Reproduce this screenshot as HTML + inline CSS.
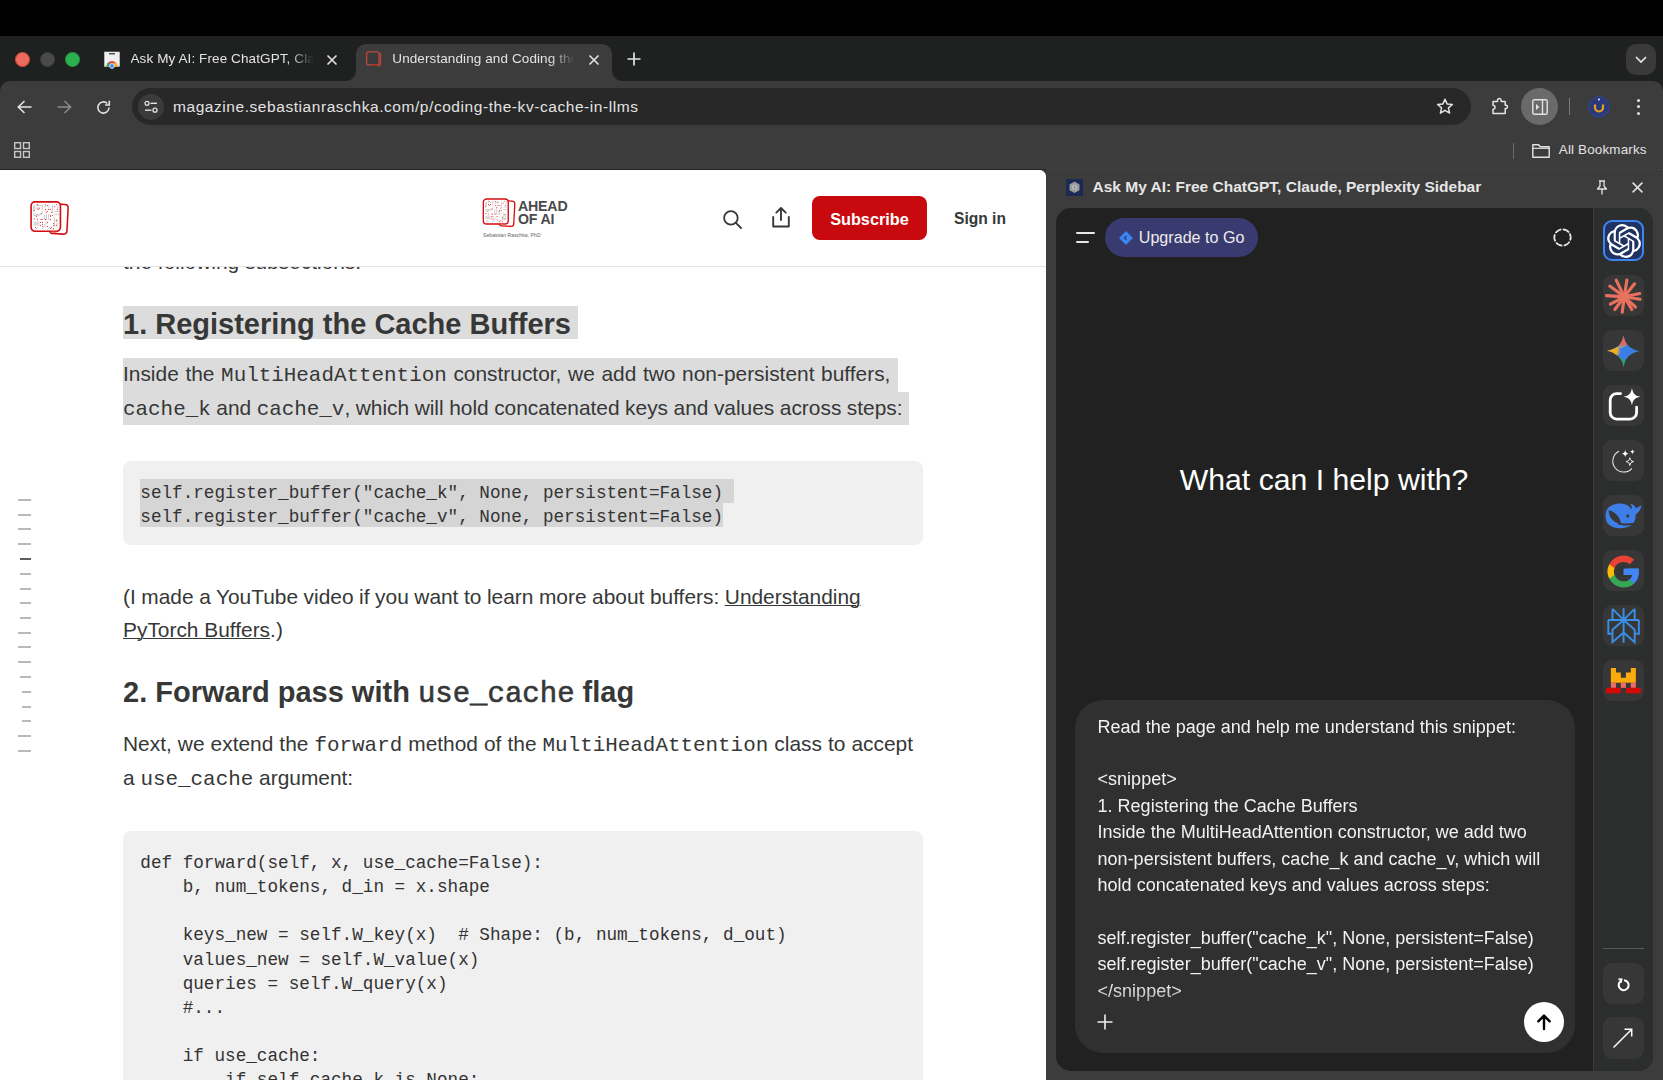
<!DOCTYPE html>
<html><head><meta charset="utf-8">
<style>
*{box-sizing:border-box;margin:0;padding:0}
html,body{width:1663px;height:1080px;overflow:hidden;background:#000;font-family:"Liberation Sans",sans-serif}
.a{position:absolute}
.t{position:absolute;white-space:pre}
svg{position:absolute;overflow:visible}
.mono{font-family:"Liberation Mono",monospace}
</style></head><body>
<!-- top black bar -->
<div class="a" style="left:0;top:0;width:1663px;height:36px;background:#000"></div>
<!-- tab strip -->
<div class="a" id="tabstrip" style="left:0;top:36px;width:1663px;height:70px;background:#1f2020"></div>
<div class="a" style="left:0;top:150px;width:1663px;height:930px;background:#3c3c3c"></div>
<!-- toolbar + bookmarks -->
<div class="a" style="left:0;top:81px;width:1663px;height:89px;background:#3c3c3c;border-radius:10px 10px 0 0"></div>
<!-- traffic lights -->
<div class="a" style="left:14.5px;top:51.5px;width:15px;height:15px;border-radius:50%;background:#ec6a5e;border:0.5px solid #d1473b"></div>
<div class="a" style="left:39.5px;top:51.5px;width:15px;height:15px;border-radius:50%;background:#4a4a4a;border:0.5px solid #3d3d3d"></div>
<div class="a" style="left:65px;top:51.5px;width:15px;height:15px;border-radius:50%;background:#2db04f;border:0.5px solid #239640"></div>
<!-- tab1 favicon (web store like) -->
<svg style="left:104px;top:51px" width="16" height="16" viewBox="0 0 16 16">
<rect x="0.5" y="1" width="15" height="14.5" fill="#f1f1f1" stroke="#cfcfcf" stroke-width="0.6"/>
<rect x="5" y="2" width="6" height="1.5" fill="#555"/>
<path d="M2.5 15.5 A5.5 5.5 0 0 1 13.5 15.5 Z" fill="#e8453c"/>
<path d="M2.5 15.5 A5.5 5.5 0 0 1 4.5 11.2 L8 15.5Z" fill="#34a853"/>
<path d="M13.5 15.5 A5.5 5.5 0 0 0 11 11 L8 15.5Z" fill="#fbbc05"/>
<circle cx="8" cy="15" r="2.4" fill="#4285f4" stroke="#fff" stroke-width="0.8"/>
</svg>
<div class="t" style="left:130.5px;top:50.3px;font-size:13.5px;letter-spacing:0.1px;line-height:18px;color:#e3e3e3;width:185px;overflow:hidden;-webkit-mask-image:linear-gradient(90deg,#000 158px,transparent 183px)">Ask My AI: Free ChatGPT, Claude</div>
<svg style="left:327px;top:54.5px" width="10" height="10" viewBox="0 0 10 10"><path d="M0.5 0.5L9.5 9.5M9.5 0.5L0.5 9.5" stroke="#e3e3e3" stroke-width="1.6"/></svg>
<!-- active tab -->
<div class="a" style="left:356px;top:44px;width:256px;height:40px;background:#3c3c3c;border-radius:10px 10px 0 0"></div>
<svg style="left:346px;top:71px" width="10" height="10" viewBox="0 0 10 10"><path d="M0 10 A10 10 0 0 0 10 0 V10Z" fill="#3c3c3c"/></svg>
<svg style="left:612px;top:71px" width="10" height="10" viewBox="0 0 10 10"><path d="M10 10 A10 10 0 0 1 0 0 V10Z" fill="#3c3c3c"/></svg>
<svg style="left:366px;top:51px" width="16" height="16" viewBox="0 0 16 16">
<rect x="0.7" y="0.9" width="12.3" height="13" rx="1.6" fill="#3a3a3a" stroke="#c0473a" stroke-width="1.3"/>
<path d="M13.2 2.5 L14.8 3.2 L14.3 14.8 L12 14.8" fill="none" stroke="#c0473a" stroke-width="1.1"/>
<circle cx="9" cy="13.8" r="0.8" fill="#e00"/>
</svg>
<div class="t" style="left:392.3px;top:50.3px;font-size:13.5px;letter-spacing:0.1px;line-height:18px;color:#e3e3e3;width:185px;overflow:hidden;-webkit-mask-image:linear-gradient(90deg,#000 158px,transparent 183px)">Understanding and Coding the KV</div>
<svg style="left:588.5px;top:54.5px" width="10" height="10" viewBox="0 0 10 10"><path d="M0.5 0.5L9.5 9.5M9.5 0.5L0.5 9.5" stroke="#e3e3e3" stroke-width="1.6"/></svg>
<svg style="left:626.5px;top:52px" width="14" height="14" viewBox="0 0 14 14"><path d="M7 0.5V13.5M0.5 7H13.5" stroke="#e3e3e3" stroke-width="1.7"/></svg>
<!-- tab dropdown -->
<div class="a" style="left:1626px;top:44px;width:30px;height:31px;border-radius:10px;background:#3a3a3a"></div>
<svg style="left:1635px;top:56px" width="12" height="7" viewBox="0 0 12 7"><path d="M1 1L6 6L11 1" fill="none" stroke="#e3e3e3" stroke-width="1.7"/></svg>
<!-- nav icons -->
<svg style="left:17px;top:100px" width="15" height="14" viewBox="0 0 15 14"><path d="M14.5 7H1.5M7.5 1L1.3 7L7.5 13" fill="none" stroke="#e3e3e3" stroke-width="1.6"/></svg>
<svg style="left:56.5px;top:100px" width="15" height="14" viewBox="0 0 15 14"><path d="M0.5 7H13.5M7.5 1L13.7 7L7.5 13" fill="none" stroke="#8a8a8a" stroke-width="1.5"/></svg>
<svg style="left:96px;top:99.5px" width="15" height="15" viewBox="0 0 15 15"><path d="M13 7.5A5.6 5.6 0 1 1 11.3 3.5" fill="none" stroke="#e3e3e3" stroke-width="1.6"/><path d="M13.3 0.8V5H9.1" fill="none" stroke="#e3e3e3" stroke-width="1.6"/></svg>
<!-- omnibox -->
<div class="a" style="left:132px;top:88px;width:1339px;height:37px;border-radius:18.5px;background:#282828"></div>
<div class="a" style="left:138px;top:93.7px;width:26px;height:26px;border-radius:50%;background:#3b3b3b"></div>
<svg style="left:144px;top:100px" width="14" height="14" viewBox="0 0 14 14"><circle cx="3" cy="3.3" r="2" fill="none" stroke="#e3e3e3" stroke-width="1.3"/><path d="M6.5 3.3H13" stroke="#e3e3e3" stroke-width="1.4"/><circle cx="11" cy="10.2" r="2" fill="none" stroke="#e3e3e3" stroke-width="1.3"/><path d="M1 10.2H7.5" stroke="#e3e3e3" stroke-width="1.4"/></svg>
<div class="t" style="left:173px;top:95.9px;font-size:15.5px;letter-spacing:0.56px;line-height:21px;color:#e3e3e3">magazine.sebastianraschka.com/p/coding-the-kv-cache-in-llms</div>
<svg style="left:1436px;top:97.5px" width="18" height="17" viewBox="0 0 18 17"><path d="M9 1.2L11.2 6.1L16.4 6.5L12.4 9.9L13.6 15.1L9 12.3L4.4 15.1L5.6 9.9L1.6 6.5L6.8 6.1Z" fill="none" stroke="#e3e3e3" stroke-width="1.5" stroke-linejoin="round"/></svg>
<!-- puzzle -->
<svg style="left:1491px;top:97px" width="19" height="19" viewBox="0 0 19 19"><path d="M2 4.5H6.5V3.2A1.8 1.8 0 0 1 10.1 3.2V4.5H14.2V8.3H15.3A1.6 1.6 0 0 1 15.3 11.4H14.2V16.5H2V12.3A2 2 0 0 0 2 8.3Z" fill="none" stroke="#e3e3e3" stroke-width="1.5" stroke-linejoin="round"/></svg>
<!-- side panel btn -->
<div class="a" style="left:1521px;top:88px;width:37.4px;height:37.4px;border-radius:50%;background:#6a6a6a"></div>
<svg style="left:1532px;top:99px" width="16" height="16" viewBox="0 0 16 16"><rect x="0.8" y="0.8" width="14.4" height="14.4" rx="1.5" fill="none" stroke="#e3e3e3" stroke-width="1.4"/><path d="M10.5 1V15" stroke="#e3e3e3" stroke-width="1.4"/><path d="M4 5L7.3 8L4 11Z" fill="#e3e3e3"/></svg>
<div class="a" style="left:1568.5px;top:98px;width:1.2px;height:17px;background:#7a7a7a"></div>
<!-- avatar -->
<svg style="left:1588px;top:95.7px" width="22" height="22" viewBox="0 0 22 22"><circle cx="11" cy="11" r="11" fill="#2c3a7a"/><circle cx="11" cy="11" r="10" fill="none" stroke="#4a5590" stroke-width="1" stroke-dasharray="1 1.5"/><path d="M7 8.5V11.5A4 4 0 0 0 15 11.5V8.5" fill="none" stroke="#e8a21a" stroke-width="2.2"/><circle cx="11" cy="3.5" r="0.9" fill="#fff"/></svg>
<!-- menu dots -->
<div class="a" style="left:1637.2px;top:98.7px;width:3.2px;height:3.2px;border-radius:50%;background:#e3e3e3"></div>
<div class="a" style="left:1637.2px;top:105.1px;width:3.2px;height:3.2px;border-radius:50%;background:#e3e3e3"></div>
<div class="a" style="left:1637.2px;top:111.5px;width:3.2px;height:3.2px;border-radius:50%;background:#e3e3e3"></div>
<!-- bookmarks bar -->
<svg style="left:14px;top:142px" width="16" height="16" viewBox="0 0 16 16"><rect x="0.7" y="0.7" width="5.8" height="5.8" fill="none" stroke="#c8c8c8" stroke-width="1.4"/><rect x="9.5" y="0.7" width="5.8" height="5.8" fill="none" stroke="#c8c8c8" stroke-width="1.4"/><rect x="0.7" y="9.5" width="5.8" height="5.8" fill="none" stroke="#c8c8c8" stroke-width="1.4"/><rect x="9.5" y="9.5" width="5.8" height="5.8" fill="none" stroke="#c8c8c8" stroke-width="1.4"/></svg>
<div class="a" style="left:1513px;top:143px;width:1.2px;height:16px;background:#6a6a6a"></div>
<svg style="left:1532px;top:144px" width="18" height="14" viewBox="0 0 18 14"><path d="M0.8 0.8H6.6L8.3 2.8H17.2V13.2H0.8Z" fill="none" stroke="#e3e3e3" stroke-width="1.4" stroke-linejoin="round"/><path d="M0.8 4.3H17.2" stroke="#e3e3e3" stroke-width="1.2"/></svg>
<div class="t" style="left:1558.8px;top:141.45px;font-size:13.4px;letter-spacing:0.18px;line-height:18px;color:#e3e3e3">All Bookmarks</div>

<div class="a" style="left:0;top:169px;width:1046px;height:1px;background:#262626"></div>
<div class="a" style="left:1050px;top:169px;width:613px;height:1px;background:repeating-linear-gradient(90deg,#555 0 1.5px,transparent 1.5px 4px)"></div>
<!-- web content -->
<div class="a" id="web" style="left:0;top:170px;width:1046px;height:910px;background:#fff;border-radius:0 7px 0 0;overflow:hidden;color:#363737">
<div class="t" style="left:123px;top:74.9px;font-size:20.9px;line-height:34px">the following subsections:</div>
<!-- header -->
<div class="a" style="left:0;top:0;width:1046px;height:97px;background:#fff;border-bottom:1px solid #e4e4e4"></div>
<svg width="0" height="0" style="position:absolute"><defs><symbol id="sslogo" viewBox="0 0 1178 1080"><rect x="600" y="200" width="420" height="730" rx="80" transform="rotate(3 810 565)" fill="#fff" stroke="#d40d12" stroke-width="38"/><rect x="125" y="145" width="720" height="720" rx="95" fill="#fff" stroke="#d40d12" stroke-width="40"/><path d="M185 240V400M215 220V330M240 230H400M400 210V340M400 360V420M180 445H400M180 480H330M450 445V600M500 445V600M550 445V600M180 640H330M180 680H330M180 710H330M470 200V280M560 220V280M650 220V420M700 380H820M690 450H820M700 520V760M760 560V740M440 720L520 660M380 830L460 740M230 830L300 760M520 830L600 760M780 230V300" stroke="#c6c6c6" stroke-width="22" fill="none"/><g fill="#e23a3f"><circle cx="280" cy="210" r="15"/><circle cx="205" cy="355" r="15"/><circle cx="275" cy="300" r="15"/><circle cx="330" cy="300" r="15"/><circle cx="300" cy="330" r="15"/><circle cx="375" cy="430" r="15"/><circle cx="255" cy="505" r="15"/><circle cx="205" cy="560" r="15"/><circle cx="280" cy="575" r="15"/><circle cx="370" cy="575" r="15"/><circle cx="395" cy="575" r="15"/><circle cx="355" cy="650" r="15"/><circle cx="405" cy="650" r="15"/><circle cx="405" cy="695" r="15"/><circle cx="355" cy="720" r="15"/><circle cx="405" cy="745" r="15"/><circle cx="230" cy="770" r="15"/><circle cx="480" cy="215" r="15"/><circle cx="525" cy="235" r="15"/><circle cx="480" cy="330" r="15"/><circle cx="550" cy="330" r="15"/><circle cx="600" cy="330" r="15"/><circle cx="520" cy="380" r="15"/><circle cx="500" cy="405" r="15"/><circle cx="625" cy="405" r="15"/><circle cx="600" cy="480" r="15"/><circle cx="600" cy="500" r="15"/><circle cx="650" cy="480" r="15"/><circle cx="480" cy="575" r="15"/><circle cx="600" cy="575" r="15"/><circle cx="525" cy="650" r="15"/><circle cx="525" cy="745" r="15"/><circle cx="745" cy="210" r="15"/><circle cx="700" cy="260" r="15"/><circle cx="770" cy="330" r="15"/><circle cx="745" cy="600" r="15"/><circle cx="675" cy="675" r="15"/><circle cx="675" cy="720" r="15"/><circle cx="745" cy="720" r="15"/><circle cx="625" cy="770" r="15"/><circle cx="600" cy="800" r="15"/><circle cx="675" cy="800" r="15"/></g><path d="M620 870 L600 905 H750 V875Z" fill="#e8665f"/></symbol></defs></svg><svg style="left:26px;top:26px" width="48" height="44"><use href="#sslogo"/></svg>
<!-- center logo -->
<svg style="left:479.39px;top:24.10px" width="40.78" height="37.39"><use href="#sslogo"/></svg>
<div class="t" style="left:518px;top:30.2px;font-size:14.2px;line-height:12.6px;font-weight:700;color:#4a4a4a;letter-spacing:-0.2px">AHEAD<br>OF AI</div>
<div class="t" style="left:483px;top:62px;font-size:5.2px;line-height:6px;color:#666">Sebastian Raschka, PhD</div>
<svg style="left:723px;top:39.5px" width="19" height="19" viewBox="0 0 19 19"><circle cx="7.9" cy="7.9" r="6.8" fill="none" stroke="#363737" stroke-width="1.8"/><path d="M12.9 12.9L18 18" stroke="#363737" stroke-width="1.8" stroke-linecap="round"/></svg>
<svg style="left:771px;top:37px" width="20" height="21" viewBox="0 0 20 21"><path d="M10 1.2V13M5.3 5.6L10 1L14.7 5.6" fill="none" stroke="#363737" stroke-width="1.9" stroke-linecap="round" stroke-linejoin="round"/><path d="M2.2 10V19.5H17.8V10" fill="none" stroke="#363737" stroke-width="1.9" stroke-linecap="round" stroke-linejoin="round"/></svg>
<div class="a" style="left:812px;top:26.2px;width:115px;height:44px;border-radius:8px;background:#c8090e"></div>
<div class="t" style="left:812px;top:36.7px;width:115px;text-align:center;font-size:16.3px;line-height:24px;font-weight:700;color:#fff">Subscribe</div>
<div class="t" style="left:954px;top:37px;font-size:15.6px;line-height:24px;font-weight:700;color:#363737">Sign in</div>
<!-- h1 -->
<div class="a" style="left:122.6px;top:135.6px;width:455px;height:33.8px;background:#dcdcdc"></div>
<div class="t" id="h1" style="left:123px;top:135.55px;font-size:29px;line-height:36px;font-weight:700">1. Registering the Cache Buffers</div>
<div class="a" style="left:122.6px;top:187.7px;width:775px;height:33.9px;background:#dcdcdc"></div>
<div class="a" style="left:122.6px;top:221.6px;width:786.1px;height:33.6px;background:#dcdcdc"></div>
<div class="t" id="p1a" style="word-spacing:0.85px;left:123px;top:187.4px;font-size:20.9px;line-height:34px">Inside the <span class="mono">MultiHeadAttention</span> constructor, we add two non-persistent buffers,</div>
<div class="t" id="p1b" style="word-spacing:-0.3px;left:123px;top:221.1px;font-size:20.9px;line-height:34px"><span class="mono">cache_k</span> and <span class="mono">cache_v</span>, which will hold concatenated keys and values across steps:</div>
<!-- code 1 -->
<div class="a" style="left:123px;top:291px;width:800px;height:83.6px;border-radius:8px;background:#f0f0f0"></div>
<div class="a" style="left:140.3px;top:308.6px;width:593.6px;height:24.2px;background:#d5d5d5"></div>
<div class="a" style="left:140.3px;top:332.8px;width:582.7px;height:24px;background:#d5d5d5"></div>
<div class="t mono" style="left:140.3px;top:311.05px;font-size:17.66px;line-height:24.1px;color:#333">self.register_buffer("cache_k", None, persistent=False)
self.register_buffer("cache_v", None, persistent=False)</div>
<!-- p2 -->
<div class="t" id="p2a" style="word-spacing:-0.25px;left:123px;top:409.85px;font-size:20.9px;line-height:34px">(I made a YouTube video if you want to learn more about buffers: <u style="text-underline-offset:1.4px;text-decoration-thickness:1.3px">Understanding</u></div>
<div class="t" id="p2b" style="left:123px;top:443.15px;font-size:20.9px;line-height:34px"><u style="text-underline-offset:1.4px;text-decoration-thickness:1.3px">PyTorch Buffers</u>.)</div>
<!-- h2 -->
<div class="t" id="h2" style="left:123px;top:504.45px;font-size:29px;line-height:36px;font-weight:700">2. Forward pass with <span class="mono" style="font-weight:400;-webkit-text-stroke:0.6px #363737">use_cache</span> flag</div>
<div class="t" id="p3a" style="word-spacing:0.25px;left:123px;top:557.45px;font-size:20.9px;line-height:34px">Next, we extend the <span class="mono">forward</span> method of the <span class="mono">MultiHeadAttention</span> class to accept</div>
<div class="t" id="p3b" style="left:123px;top:591.45px;font-size:20.9px;line-height:34px">a <span class="mono">use_cache</span> argument:</div>
<!-- code 2 -->
<div class="a" style="left:123px;top:660.8px;width:800px;height:400px;border-radius:8px;background:#f0f0f0"></div>
<div class="t mono" style="left:140.3px;top:680.95px;font-size:17.66px;line-height:24.15px;color:#333">def forward(self, x, use_cache=False):
    b, num_tokens, d_in = x.shape

    keys_new = self.W_key(x)  # Shape: (b, num_tokens, d_out)
    values_new = self.W_value(x)
    queries = self.W_query(x)
    #...

    if use_cache:
        if self.cache_k is None:
            self.cache_k, self.cache_v = keys_new, values_new</div>
</div>
<!-- TOC -->
<div class="a" id="toc" style="left:0;top:0">
<div class="a" style="left:17.5px;top:499px;width:13.5px;height:2px;background:#b9b9b9"></div>
<div class="a" style="left:17.5px;top:514px;width:13.5px;height:2px;background:#b9b9b9"></div>
<div class="a" style="left:17.5px;top:528px;width:13.5px;height:2px;background:#b9b9b9"></div>
<div class="a" style="left:17.5px;top:543px;width:13.5px;height:2px;background:#b9b9b9"></div>
<div class="a" style="left:20px;top:558px;width:11.0px;height:2px;background:#5e5e5e"></div>
<div class="a" style="left:20px;top:573px;width:11.0px;height:2px;background:#b9b9b9"></div>
<div class="a" style="left:20px;top:588px;width:11.0px;height:2px;background:#b9b9b9"></div>
<div class="a" style="left:20px;top:602px;width:11.0px;height:2px;background:#b9b9b9"></div>
<div class="a" style="left:20px;top:617px;width:11.0px;height:2px;background:#b9b9b9"></div>
<div class="a" style="left:17.5px;top:632px;width:13.5px;height:2px;background:#b9b9b9"></div>
<div class="a" style="left:17.5px;top:646px;width:13.5px;height:2px;background:#b9b9b9"></div>
<div class="a" style="left:17.5px;top:661px;width:13.5px;height:2px;background:#b9b9b9"></div>
<div class="a" style="left:20px;top:676px;width:11.0px;height:2px;background:#b9b9b9"></div>
<div class="a" style="left:22px;top:691px;width:9.0px;height:2px;background:#b9b9b9"></div>
<div class="a" style="left:22px;top:706px;width:9.0px;height:2px;background:#b9b9b9"></div>
<div class="a" style="left:22px;top:720px;width:9.0px;height:2px;background:#b9b9b9"></div>
<div class="a" style="left:17.5px;top:735px;width:13.5px;height:2px;background:#b9b9b9"></div>
<div class="a" style="left:17.5px;top:750px;width:13.5px;height:2px;background:#b9b9b9"></div>
</div>

<!-- sidebar -->
<div class="a" id="side" style="left:1046px;top:170px;width:617px;height:910px;background:#3c3c3c"></div>
<!-- sidebar header -->
<svg style="left:1066px;top:179px" width="17" height="17" viewBox="0 0 17 17"><rect width="17" height="17" fill="#1b2a55"/><path d="M8.5 2.5L13.5 5.4V11.2L8.5 14.1L3.5 11.2V5.4Z" fill="#9a9a9a"/><circle cx="8.5" cy="8.3" r="2.6" fill="#cfcfcf"/><path d="M8.5 5.5V11M6 7L11 10M11 7L6 10" stroke="#777" stroke-width="0.6"/></svg>
<div class="t" style="left:1092.5px;top:177px;font-size:15.5px;line-height:20px;font-weight:700;color:#e6e6e6">Ask My AI: Free ChatGPT, Claude, Perplexity Sidebar</div>
<svg style="left:1596px;top:180px" width="12" height="15" viewBox="0 0 12 15"><path d="M3 1H9M4 1V6L1.5 9H10.5L8 6V1M6 9V14.5" fill="none" stroke="#e3e3e3" stroke-width="1.3" stroke-linejoin="round"/></svg>
<svg style="left:1632px;top:181.5px" width="11" height="11" viewBox="0 0 11 11"><path d="M0.6 0.6L10.4 10.4M10.4 0.6L0.6 10.4" stroke="#e3e3e3" stroke-width="1.5"/></svg>
<!-- panel -->
<div class="a" style="left:1056px;top:208px;width:597px;height:863px;border-radius:15px;background:#212121;overflow:hidden">
  <div class="a" style="left:537px;top:0;width:60px;height:863px;background:#2c2d2d;border-left:1px solid #3c3c3c"></div>
</div>
<!-- hamburger -->
<div class="a" style="left:1076px;top:232px;width:19.2px;height:2.3px;border-radius:1px;background:#e8e8e8"></div>
<div class="a" style="left:1076px;top:241px;width:12.6px;height:2.3px;border-radius:1px;background:#e8e8e8"></div>
<!-- upgrade pill -->
<div class="a" style="left:1105.3px;top:217.8px;width:152.6px;height:39.3px;border-radius:20px;background:#393b70"></div>
<svg style="left:1118.5px;top:230.8px" width="14" height="14" viewBox="0 0 14 14"><path d="M7 0.6L13.4 7L7 13.4L0.6 7Z" fill="#3a87f5" stroke="#3a87f5" stroke-width="1" stroke-linejoin="round"/><path d="M7.6 5L5.4 7L7.6 9" fill="none" stroke="#393b70" stroke-width="1.3"/></svg>
<div class="t" style="left:1138.8px;top:226.9px;font-size:16.1px;line-height:20px;color:#ececec">Upgrade to Go</div>
<svg style="left:1552.5px;top:227.5px" width="19" height="19" viewBox="0 0 19 19"><circle cx="9.5" cy="9.5" r="8.2" fill="none" stroke="#e8e8e8" stroke-width="1.7" stroke-dasharray="7.2 1.4" transform="rotate(-30 9.5 9.5)"/></svg>
<div class="t" style="left:1179.8px;top:462.1px;font-size:30.2px;line-height:36px;color:#fff">What can I help with?</div>
<!-- composer -->
<div class="a" style="left:1075px;top:700px;width:500px;height:353px;border-radius:28px;background:#303030"></div>
<div class="t" style="left:1097.6px;top:713.56px;height:292px;overflow:hidden;font-size:18px;line-height:26.4px;color:#f2f2f2;-webkit-mask-image:linear-gradient(180deg,#000 270px,rgba(0,0,0,.55) 292px)">Read the page and help me understand this snippet:

&lt;snippet&gt;
1. Registering the Cache Buffers
Inside the MultiHeadAttention constructor, we add two
non-persistent buffers, cache_k and cache_v, which will
hold concatenated keys and values across steps:

self.register_buffer("cache_k", None, persistent=False)
self.register_buffer("cache_v", None, persistent=False)
&lt;/snippet&gt;</div>
<svg style="left:1097px;top:1014px" width="16" height="16" viewBox="0 0 16 16"><path d="M8 0.5V15.5M0.5 8H15.5" stroke="#f0f0f0" stroke-width="1.6"/></svg>
<div class="a" style="left:1523.5px;top:1001.5px;width:40px;height:40px;border-radius:50%;background:#fff"></div>
<svg style="left:1537px;top:1013.5px" width="14" height="16" viewBox="0 0 14 16"><path d="M7 15V1.8M1.3 7.3L7 1.6L12.7 7.3" fill="none" stroke="#000" stroke-width="2.4" stroke-linecap="round" stroke-linejoin="round"/></svg>
<!-- rail buttons -->
<div class="a" style="left:1602.8px;top:219.9px;width:41.3px;height:41.3px;border-radius:9px;background:#1f3261;border:2px solid #3b86f0"></div>
<div class="a" style="left:1602.8px;top:274.9px;width:41px;height:41.3px;border-radius:9px;background:#373737"></div>
<div class="a" style="left:1602.8px;top:329.9px;width:41px;height:41.3px;border-radius:9px;background:#373737"></div>
<div class="a" style="left:1602.8px;top:384.9px;width:41px;height:41.3px;border-radius:9px;background:#373737"></div>
<div class="a" style="left:1602.8px;top:439.9px;width:41px;height:41.3px;border-radius:9px;background:#373737"></div>
<div class="a" style="left:1602.8px;top:494.9px;width:41px;height:41.3px;border-radius:9px;background:#373737"></div>
<div class="a" style="left:1602.8px;top:549.9px;width:41px;height:41.3px;border-radius:9px;background:#373737"></div>
<div class="a" style="left:1602.8px;top:604.9px;width:41px;height:41.3px;border-radius:9px;background:#373737"></div>
<div class="a" style="left:1602.8px;top:659.9px;width:41px;height:41.3px;border-radius:9px;background:#373737"></div>
<div class="a" style="left:1602.5px;top:947.6px;width:41.5px;height:1.4px;background:#5a5a5a"></div>
<div class="a" style="left:1602.5px;top:962.6px;width:41.5px;height:41px;border-radius:9px;background:#373737"></div>
<div class="a" style="left:1602.5px;top:1017.4px;width:41.5px;height:41.6px;border-radius:9px;background:#373737"></div>
<!-- chatgpt logo -->
<svg style="left:1606.5px;top:223.5px" width="34" height="34" viewBox="0 0 24 24"><path fill="#fff" d="M22.2819 9.8211a5.9847 5.9847 0 0 0-.5157-4.9108 6.0462 6.0462 0 0 0-6.5098-2.9A6.0651 6.0651 0 0 0 4.9807 4.1818a5.9847 5.9847 0 0 0-3.9977 2.9 6.0462 6.0462 0 0 0 .7427 7.0966 5.98 5.98 0 0 0 .511 4.9107 6.051 6.051 0 0 0 6.5146 2.9001A5.9847 5.9847 0 0 0 13.2599 24a6.0557 6.0557 0 0 0 5.7718-4.2058 5.9894 5.9894 0 0 0 3.9977-2.9001 6.0557 6.0557 0 0 0-.7475-7.0729zm-9.022 12.6081a4.4755 4.4755 0 0 1-2.8764-1.0408l.1419-.0804 4.7783-2.7582a.7948.7948 0 0 0 .3927-.6813v-6.7369l2.02 1.1686a.071.071 0 0 1 .038.052v5.5826a4.504 4.504 0 0 1-4.4945 4.4944zm-9.6607-4.1254a4.4708 4.4708 0 0 1-.5346-3.0137l.142.0852 4.783 2.7582a.7712.7712 0 0 0 .7806 0l5.8428-3.3685v2.3324a.0804.0804 0 0 1-.0332.0615L9.74 19.9502a4.4992 4.4992 0 0 1-6.1408-1.6464zM2.3408 7.8956a4.485 4.485 0 0 1 2.3655-1.9728V11.6a.7664.7664 0 0 0 .3879.6765l5.8144 3.3543-2.0201 1.1685a.0757.0757 0 0 1-.071 0l-4.8303-2.7865A4.504 4.504 0 0 1 2.3408 7.872zm16.5963 3.8558L13.1038 8.364 15.1192 7.2a.0757.0757 0 0 1 .071 0l4.8303 2.7913a4.4944 4.4944 0 0 1-.6765 8.1042v-5.6772a.79.79 0 0 0-.407-.667zm2.0107-3.0231l-.142-.0852-4.7735-2.7818a.7759.7759 0 0 0-.7854 0L9.409 9.2297V6.8974a.0662.0662 0 0 1 .0284-.0615l4.8303-2.7866a4.4992 4.4992 0 0 1 6.6802 4.66zM8.3065 12.863l-2.02-1.1638a.0804.0804 0 0 1-.038-.0567V6.0742a4.4992 4.4992 0 0 1 7.3757-3.4537l-.142.0805L8.704 5.459a.7948.7948 0 0 0-.3927.6813zm1.0976-2.3654l2.602-1.4998 2.6069 1.4998v2.9994l-2.5974 1.4997-2.6067-1.4997Z"/></svg>
<!-- claude -->
<svg style="left:1600px;top:272px" width="48" height="100" viewBox="0 0 518 1080"><g stroke="#e8705f" stroke-width="34" stroke-linecap="round">
<path d="M262 268L175 88"/><path d="M262 268L290 88"/><path d="M262 268L373 128"/><path d="M262 268L428 232"/><path d="M262 268L432 295"/><path d="M262 268L383 378"/><path d="M262 268L343 405"/><path d="M262 268L240 435"/><path d="M262 268L160 405"/><path d="M262 268L112 348"/><path d="M262 268L70 255"/><path d="M262 268L105 152"/></g><circle cx="262" cy="268" r="52" fill="#e8705f"/>
<g fill="#e6a23c"><circle cx="235" cy="240" r="5"/><circle cx="275" cy="232" r="5"/><circle cx="255" cy="265" r="5"/><circle cx="295" cy="262" r="5"/><circle cx="240" cy="295" r="5"/><circle cx="285" cy="295" r="5"/></g>
<path d="M255 685C268 770 320 835 425 855C320 872 268 935 255 1025C242 935 190 872 75 850C190 830 242 770 255 685Z" fill="#3b7fe6"/>
<path d="M255 685C262 730 275 760 295 790L200 800C225 765 245 730 255 685Z" fill="#e5675a"/>
<path d="M75 850C140 838 175 820 200 800L188 905C165 885 135 862 75 850Z" fill="#f0ad1e"/>
<path d="M188 905L270 955L255 1025C245 970 225 935 188 905Z" fill="#2ea55a"/>
<path d="M200 800L295 790L215 830L210 885L188 905Z" fill="#9a9a9a"/>
</svg>
<!-- copilot box -->
<svg style="left:1600px;top:382px" width="48" height="100" viewBox="0 0 518 1080">
<path d="M222 125H180A70 70 0 0 0 110 195V330A70 70 0 0 0 180 400H325A70 70 0 0 0 395 330V272" fill="none" stroke="#fff" stroke-width="30" stroke-linecap="round"/>
<path d="M345 65C356 125 375 148 435 160C375 172 356 195 345 252C334 195 315 172 255 160C315 148 334 125 345 65Z" fill="#fff"/>
<path d="M205 748A118 118 0 1 0 345 932" fill="none" stroke="#e8e8e8" stroke-width="11"/>
<path d="M272 735C277 762 285 770 308 775C285 780 277 788 272 812C267 788 259 780 236 775C259 770 267 762 272 735Z" fill="#fff"/>
<path d="M350 725C354 744 359 749 378 753C359 757 354 762 350 780C346 762 341 757 322 753C341 749 346 744 350 725Z" fill="#fff"/>
<path d="M322 818C327 845 335 853 362 860C335 867 327 875 322 902C317 875 309 867 282 860C309 853 317 845 322 818Z" fill="none" stroke="#fff" stroke-width="10" stroke-linejoin="round"/>
</svg>
<!-- deepseek -->
<svg style="left:1600px;top:495px" width="48" height="150" viewBox="0 0 346 1080">
<path d="M40 140C40 88 92 58 150 60C192 62 215 82 226 102C234 88 226 72 216 60C240 64 254 78 258 94C272 90 286 82 298 72C296 108 275 128 256 140C262 182 240 226 180 236C118 246 60 226 46 186C41 170 40 156 40 140Z" fill="#3d7ee8"/>
<path d="M62 112C98 114 140 150 152 206C110 206 66 176 62 112Z" fill="#373737"/>
<circle cx="200" cy="150" r="11" fill="#373737"/>
<path d="M128 196C160 206 205 208 240 200L238 214C195 222 152 220 128 208Z" fill="#373737"/>
<path d="M58 900H280M170 815V1065M90 820L170 900L250 820M90 820V900M250 820V900M60 900V1000H90M280 900V1000H250M170 900L90 970V1060L170 990L250 1060V970L170 900" fill="none" stroke="#3a8ee6" stroke-width="14" stroke-linejoin="miter"/>
</svg>
<!-- google -->
<svg style="left:1606px;top:554px" width="35" height="35" viewBox="0 0 24 24"><path d="M22.6 12.3c0-.8-.1-1.6-.2-2.3H12v4.4h5.9c-.3 1.4-1 2.5-2.2 3.3v2.7h3.5c2.1-1.9 3.4-4.7 3.4-8.1z" fill="#4285f4"/><path d="M12 23c3 0 5.5-1 7.3-2.7l-3.5-2.7c-1 .7-2.2 1.1-3.7 1.1-2.9 0-5.3-1.9-6.2-4.5H2.3v2.8C4.1 20.5 7.8 23 12 23z" fill="#34a853"/><path d="M5.8 14.2c-.2-.7-.4-1.4-.4-2.2s.1-1.5.4-2.2V7H2.3C1.5 8.5 1 10.2 1 12s.5 3.5 1.3 5l3.5-2.8z" fill="#fbbc05"/><path d="M12 5.4c1.6 0 3.1.6 4.2 1.6l3.1-3.1C17.5 2.1 15 1 12 1 7.8 1 4.1 3.5 2.3 7l3.5 2.8C6.7 7.2 9.1 5.4 12 5.4z" fill="#ea4335"/><path d="M12 8.3A3.7 3.7 0 1 0 12 15.7A3.7 3.7 0 1 0 12 8.3Z" fill="#343434"/><rect x="12" y="10" width="10.4" height="4.4" fill="#4285f4"/><rect x="7.6" y="8.2" width="4.4" height="7.6" fill="#343434" opacity="0"/></svg>
<!-- mistral -->
<svg style="left:1600px;top:655px" width="48" height="50" viewBox="0 0 1037 1080">
<path d="M235 280H345V380H450V490H560V380H665V280H775V600H235Z" fill="#fbab0c"/>
<rect x="235" y="600" width="110" height="110" fill="#ec6b66"/><rect x="450" y="600" width="110" height="110" fill="#ec6b66"/><rect x="665" y="600" width="110" height="110" fill="#ec6b66"/>
<rect x="130" y="710" width="320" height="120" fill="#d20a0a"/><rect x="560" y="710" width="325" height="120" fill="#d20a0a"/>
</svg>
<!-- refresh -->
<svg style="left:1616.5px;top:977.5px" width="14" height="14" viewBox="0 0 14 14"><path d="M3.2 3.6A5 5 0 1 0 7 2.2" fill="none" stroke="#fff" stroke-width="2.1"/><path d="M1.5 1.2L4.5 1.5L3.6 4.6" fill="none" stroke="#fff" stroke-width="2"/></svg>
<!-- arrow -->
<svg style="left:1612px;top:1027px" width="22" height="22" viewBox="0 0 22 22"><path d="M1.5 20.5L19.5 2.5M12.5 2.3H19.7V9.5" fill="none" stroke="#fff" stroke-width="1.5"/></svg>

</body></html>
